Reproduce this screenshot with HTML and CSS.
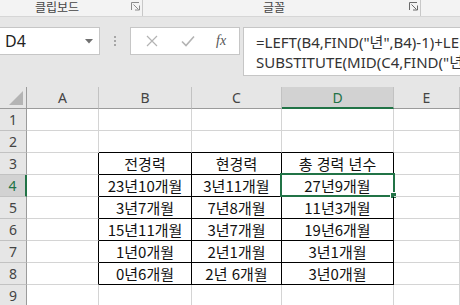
FILE: index.html
```html
<!DOCTYPE html>
<html lang="ko">
<head>
    <meta charset="UTF-8">
    <title>Excel - 경력 합산</title>
    <link rel="stylesheet" href="styles.css">
</head>
<body>
    <div class="ribbon">
        <div class="group group-clip">
            <span class="group-label">클립보드</span>
            <svg class="launcher" width="9" height="9" viewBox="0 0 9 9"><path d="M0.5 8V0.5H8" fill="none" stroke="#8a8a8a"/><path d="M2.5 2.5l5 5M8.5 3.5v4.5H4" fill="none" stroke="#8a8a8a"/></svg>
        </div>
        <div class="group group-font">
            <span class="group-label">글꼴</span>
            <svg class="launcher" width="9" height="9" viewBox="0 0 9 9"><path d="M0.5 8V0.5H8" fill="none" stroke="#6a6a6a"/><path d="M2.5 2.5l5 5M8.5 3.5v4.5H4" fill="none" stroke="#6a6a6a"/></svg>
        </div>
    </div>

    <div class="formula-bar">
        <div class="name-box">
            <span>D4</span>
            <svg width="8" height="5" viewBox="0 0 8 5"><path d="M0 0h8L4 4.5z" fill="#707070"/></svg>
        </div>
        <div class="grip"><i></i><i></i><i></i></div>
        <div class="fx-box">
            <svg width="12" height="12" viewBox="0 0 12 12"><path d="M1 1l10 10M11 1L1 11" stroke="#b3b3b3" stroke-width="1.2"/></svg>
            <svg width="14" height="12" viewBox="0 0 14 12"><path d="M1 6.5l4 4L13 1.5" fill="none" stroke="#b3b3b3" stroke-width="1.6"/></svg>
            <span class="fx">fx</span>
        </div>
        <div class="formula">
            <div>=LEFT(B4,FIND("년",B4)-1)+LEFT(C4,FIND("년",C4)-1)</div>
            <div>SUBSTITUTE(MID(C4,FIND("년",C4)+1,2),"개","")</div>
        </div>
    </div>

    <div class="sheet">
        <div class="hd corner"><span class="tri"></span></div>
        <div class="hd col">A</div>
        <div class="hd col">B</div>
        <div class="hd col">C</div>
        <div class="hd col active-col">D</div>
        <div class="hd col">E</div>

        <div class="hd row">1</div>
        <div class="c"></div><div class="c"></div><div class="c"></div><div class="c"></div><div class="c"></div>

        <div class="hd row">2</div>
        <div class="c"></div><div class="c tb"></div><div class="c tb"></div><div class="c tb"></div><div class="c"></div>

        <div class="hd row">3</div>
        <div class="c tl"></div><div class="c t">전경력</div><div class="c t">현경력</div><div class="c t">총 경력 년수</div><div class="c"></div>

        <div class="hd row active-row">4</div>
        <div class="c tl"></div><div class="c t">23년10개월</div><div class="c t">3년11개월</div><div class="c t selected">27년9개월<span class="sel"><span class="handle"></span></span></div><div class="c"></div>

        <div class="hd row">5</div>
        <div class="c tl"></div><div class="c t">3년7개월</div><div class="c t">7년8개월</div><div class="c t">11년3개월</div><div class="c"></div>

        <div class="hd row">6</div>
        <div class="c tl"></div><div class="c t">15년11개월</div><div class="c t">3년7개월</div><div class="c t">19년6개월</div><div class="c"></div>

        <div class="hd row">7</div>
        <div class="c tl"></div><div class="c t">1년0개월</div><div class="c t">2년1개월</div><div class="c t">3년1개월</div><div class="c"></div>

        <div class="hd row">8</div>
        <div class="c tl"></div><div class="c t">0년6개월</div><div class="c t">2년 6개월</div><div class="c t">3년0개월</div><div class="c"></div>

        <div class="hd row">9</div>
        <div class="c"></div><div class="c"></div><div class="c"></div><div class="c"></div><div class="c"></div>
    </div>
</body>
</html>
```

FILE: styles.css
```css
body {
    margin: 0;
    width: 460px;
    height: 305px;
    overflow: hidden;
    background: #e6e6e6;
    font-family: "Noto Sans", "Noto Sans CJK KR", sans-serif;
}

/* ribbon strip */
.ribbon {
    display: flex;
    height: 16px;
    background: #f3f3f3;
    border-bottom: 1px solid #d6d6d6;
}
.group {
    display: flex;
    align-items: center;
    box-sizing: border-box;
    height: 16px;
    border-right: 1px solid #c8c8c8;
}
.group-clip {
    width: 143px;
    padding-left: 35px;
}
.group-font {
    width: 278px;
    padding-left: 120px;
}
.group-label {
    font-family: "Noto Sans CJK KR", sans-serif;
    font-size: 12px;
    line-height: 16px;
    color: #444;
    margin-top: -2px;
}
.launcher {
    margin-left: auto;
    margin-right: 2px;
    margin-top: -4px;
}

/* formula bar */
.formula-bar {
    display: flex;
    align-items: flex-start;
    height: 70px;
    padding-top: 10px;
    box-sizing: border-box;
}
.name-box {
    display: flex;
    align-items: center;
    justify-content: space-between;
    box-sizing: border-box;
    width: 100px;
    height: 28px;
    padding: 0 6px 0 5px;
    background: #fff;
    border: 1px solid #c6c6c6;
    border-left: none;
    font-size: 16px;
    color: #222;
}
.grip {
    display: flex;
    flex-direction: column;
    gap: 2px;
    width: 30px;
    padding-top: 9px;
    align-items: center;
}
.grip i {
    display: block;
    width: 2px;
    height: 2px;
    background: #a6a6a6;
}
.fx-box {
    display: flex;
    align-items: center;
    gap: 23px;
    box-sizing: border-box;
    width: 110px;
    height: 28px;
    padding-left: 15px;
    background: #fff;
    border: 1px solid #c6c6c6;
}
.fx {
    font-family: "Liberation Serif", serif;
    font-style: italic;
    font-size: 14px;
    color: #555;
    margin-left: -2px;
}
.formula {
    flex: 1;
    margin-left: 3px;
    height: 49px;
    padding: 4px 0 0 12px;
    box-sizing: border-box;
    background: #fff;
    border: 1px solid #c6c6c6;
    border-right: none;
    font-size: 15px;
    line-height: 20px;
    color: #333;
    white-space: nowrap;
    overflow: hidden;
}

/* worksheet grid */
.sheet {
    display: grid;
    grid-template-columns: 27px 72px 93px 90px 112px 1fr;
    grid-auto-rows: 22px;
    background: #fff;
}
.c, .hd {
    box-sizing: border-box;
    border-right: 1px solid #d4d4d4;
    border-bottom: 1px solid #d4d4d4;
    display: flex;
    align-items: center;
    justify-content: center;
    position: relative;
}
.c {
    font-family: "Noto Sans CJK KR", sans-serif;
    font-size: 15px;
    color: #111;
}
.hd {
    background: #e6e6e6;
    font-size: 14px;
    color: #444;
}
.col {
    border-right-color: #c2c2c2;
    border-bottom-color: #9b9b9b;
}
.row {
    border-right-color: #9b9b9b;
    border-bottom-color: #c2c2c2;
}
.corner {
    border-right-color: #9b9b9b;
    border-bottom-color: #9b9b9b;
}
.tri {
    position: absolute;
    right: 3px;
    bottom: 3px;
    width: 0;
    height: 0;
    border-left: 14px solid transparent;
    border-bottom: 14px solid #b4b4b4;
}
.active-col {
    background: #d2d2d2;
    border-bottom: 2px solid #217346;
    color: #217346;
}
.active-row {
    background: #d2d2d2;
    border-right: 2px solid #217346;
    color: #217346;
}

/* table borders */
.tb { border-bottom-color: #000; }
.tl { border-right-color: #000; }
.t {
    border-right-color: #000;
    border-bottom-color: #000;
}

.sel {
    position: absolute;
    top: -2px;
    left: -2px;
    right: -2px;
    bottom: -1px;
    border: 2px solid #217346;
}
.handle {
    position: absolute;
    right: -4px;
    bottom: -4px;
    width: 5px;
    height: 5px;
    background: #217346;
    border: 1px solid #fff;
}
```
